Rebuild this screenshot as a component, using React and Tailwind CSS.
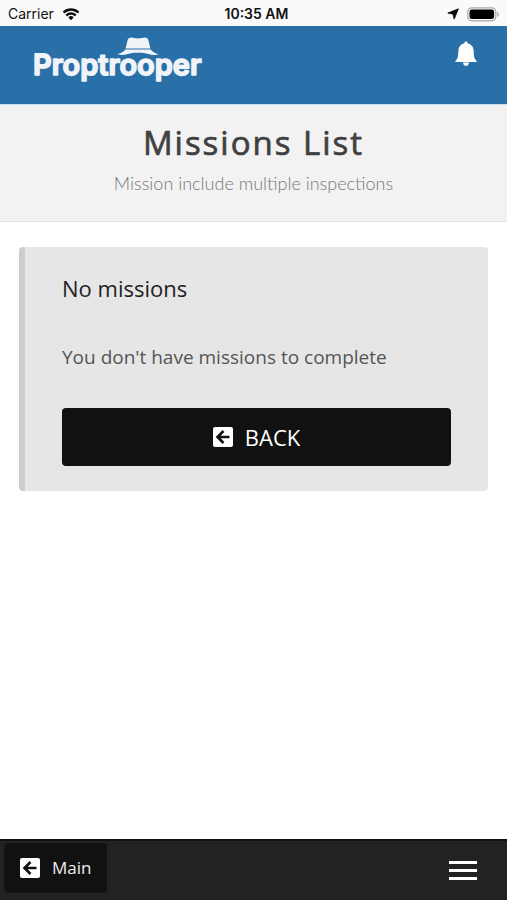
import React from "react";

function WifiIcon() {
  return (
    <svg className="h-[13px] w-[18px]" viewBox="0 0 17 12" fill="#0b0b0b" aria-hidden="true">
      <path d="M8.5 2.4c2.3 0 4.4.9 6 2.4.1.1.3.1.4 0l1.2-1.2c.1-.1.1-.3 0-.5A11 11 0 0 0 .9 3.1c-.1.2-.1.4 0 .5l1.2 1.2c.1.1.3.1.4 0a8.7 8.7 0 0 1 6-2.4z" />
      <path d="M8.5 6.3c1.3 0 2.5.5 3.4 1.3.1.1.3.1.4 0l1.2-1.2c.1-.1.1-.3 0-.5a7.3 7.3 0 0 0-10 0c-.1.2-.1.4 0 .5l1.2 1.2c.1.1.3.1.4 0a5 5 0 0 1 3.4-1.3z" />
      <path d="M10.9 8.9c.1-.1.1-.3 0-.4a3.7 3.7 0 0 0-4.8 0c-.1.1-.1.3 0 .4l2.2 2.2c.1.1.3.1.4 0z" />
    </svg>
  );
}

function LocationIcon() {
  return (
    <svg className="h-3 w-3" viewBox="0 0 12 12" fill="#0b0b0b" stroke="#0b0b0b" strokeWidth="0.8" strokeLinejoin="round" aria-hidden="true">
      <path d="M11.4.8 7.2 11.2 6 6.2.8 5z" />
    </svg>
  );
}

function BatteryIcon() {
  return (
    <svg className="h-[15px] w-8" viewBox="0 0 32 15" aria-hidden="true">
      <rect x="0.8" y="0.8" width="28" height="13" rx="4" fill="#fafafa" stroke="#a9a9a9" strokeWidth="1.2" />
      <rect x="2.5" y="2.5" width="24.6" height="9.6" rx="2.4" fill="#000" />
      <path d="M30.2 5c1 .3 1.5 1.2 1.5 2.4s-.5 2.1-1.5 2.4z" fill="#a9a9a9" />
    </svg>
  );
}

function BellIcon() {
  return (
    <svg className="h-[26px] w-[22px]" viewBox="0 0 22 26" fill="#fff" aria-hidden="true">
      <path d="M11 .5c-.9 0-1.6.7-1.6 1.6v.5C5.7 3.2 3.6 6 3.4 9.6l-.3 4.4c-.1 2.2-.7 3.9-2.2 5.4-.6.6-.7.9-.6 1.3.1.3.4.4.8.4h19.8c.4 0 .7-.1.8-.4.1-.4 0-.7-.6-1.3-1.5-1.5-2.1-3.2-2.2-5.4l-.3-4.4c-.2-3.6-2.3-6.4-6-7v-.5C12.6 1.2 11.9.5 11 .5z" />
      <path d="M8 21.5h6c-.2 2.2-1.4 3.4-3 3.4s-2.8-1.2-3-3.4z" />
    </svg>
  );
}

function HatIcon() {
  return (
    <svg className="absolute left-[84px] top-0 h-5 w-[42px]" viewBox="0 0 42 20" fill="#f0f3f7" aria-hidden="true">
      <path d="M8.6 11.6 10.5 3.5C11 1.5 12.3.6 14.2.6c2.2 0 4 .8 6.8.8s4.6-.8 6.8-.8c1.9 0 3.2.9 3.7 2.9l1.9 8.1z" />
      <path d="M8.4 12.6h25.2c1.6 2.1 4.2 3.6 7.9 4.6-4.2 1.3-7 .7-10-.2-6.3-1.7-14.7-1.7-21 0-3 .9-5.800 1.500-10 .2 3.700-1 6.300-2.500 7.900-4.600z" />
    </svg>
  );
}

function BackIcon() {
  return (
    <svg className="size-5 shrink-0" viewBox="0 0 20 20" aria-hidden="true">
      <rect width="20" height="20" rx="2" fill="#fff" />
      <path d="M16.5 10H5M10.5 4 4.5 10l6 6" fill="none" stroke="#111" strokeWidth="2.6" />
    </svg>
  );
}

export default function App() {
  return (
    <div className="flex min-h-screen flex-col bg-white font-['Open_Sans',sans-serif]">
      <div className="grid h-[26px] grid-cols-3 items-center bg-[#fafafa] px-2 pt-0.5 font-['Inter',sans-serif] text-sm text-[#111]">
        <div className="flex items-center gap-2">
          <span>Carrier</span>
          <WifiIcon />
        </div>
        <span className="whitespace-nowrap pl-1.5 text-center font-semibold">10:35 AM</span>
        <div className="flex items-center justify-end gap-2">
          <LocationIcon />
          <BatteryIcon />
        </div>
      </div>

      <header className="flex h-[79px] items-start justify-between border-b border-[#c9e0f1] bg-[#2a70a8] pl-[33px] pr-[30px] pt-[11px]">
        <a href="#home" aria-label="Proptrooper" className="relative block">
          <svg className="h-[52px] w-[190px]" viewBox="0 0 190 52" aria-hidden="true">
            <text
              x="0"
              y="38"
              className="fill-[#f0f3f7] stroke-[#f0f3f7] font-['Inter',sans-serif] text-[29px] font-semibold [text-rendering:geometricPrecision]"
              strokeWidth="1.6"
              strokeLinejoin="round"
            >
              Proptrooper
            </text>
          </svg>
          <HatIcon />
        </a>
        <button type="button" aria-label="Notifications" className="mt-1">
          <BellIcon />
        </button>
      </header>

      <section className="h-[117px] border-b border-[#e4e4e4] bg-[#f2f2f2] pt-4 text-center">
        <h1 className="text-[33px] font-medium leading-[44px] tracking-[2px] text-[#404040] [-webkit-text-stroke:thin_#404040]">
          Missions List
        </h1>
        <p className="pt-1 font-['Lato',sans-serif] text-lg font-light leading-7 text-[#777]">
          Mission include multiple inspections
        </p>
      </section>

      <main className="grow px-[19px] py-[25px]">
        <article className="rounded-[4px] border-l-6 border-[#cdcdcd] bg-[#e6e6e6] px-[37px] py-[25px]">
          <h2 className="text-[22px] leading-8 text-[#222]">No missions</h2>
          <p className="pt-9 text-[19px] leading-[34px] text-[#555]">You don't have missions to complete</p>
          <button
            type="button"
            className="mt-[34px] flex h-[58px] w-full items-center justify-center gap-3 rounded-[4px] bg-[#111] text-[22px] text-white"
          >
            <BackIcon />
            BACK
          </button>
        </article>
      </main>

      <footer className="flex h-[61px] items-start justify-between border-t-2 border-[#111] bg-[#222] pl-1 pr-[30px] pt-0.5">
        <button
          type="button"
          className="flex h-[50px] items-center gap-3 rounded-[4px] bg-[#111] px-4 text-[17px] text-[#eee]"
        >
          <BackIcon />
          Main
        </button>
        <button type="button" aria-label="Menu" className="flex h-[54px] w-7 flex-col justify-center gap-[5px]">
          <span className="h-[3px] w-full bg-white" />
          <span className="h-[3px] w-full bg-white" />
          <span className="h-[3px] w-full bg-white" />
        </button>
      </footer>
    </div>
  );
}
